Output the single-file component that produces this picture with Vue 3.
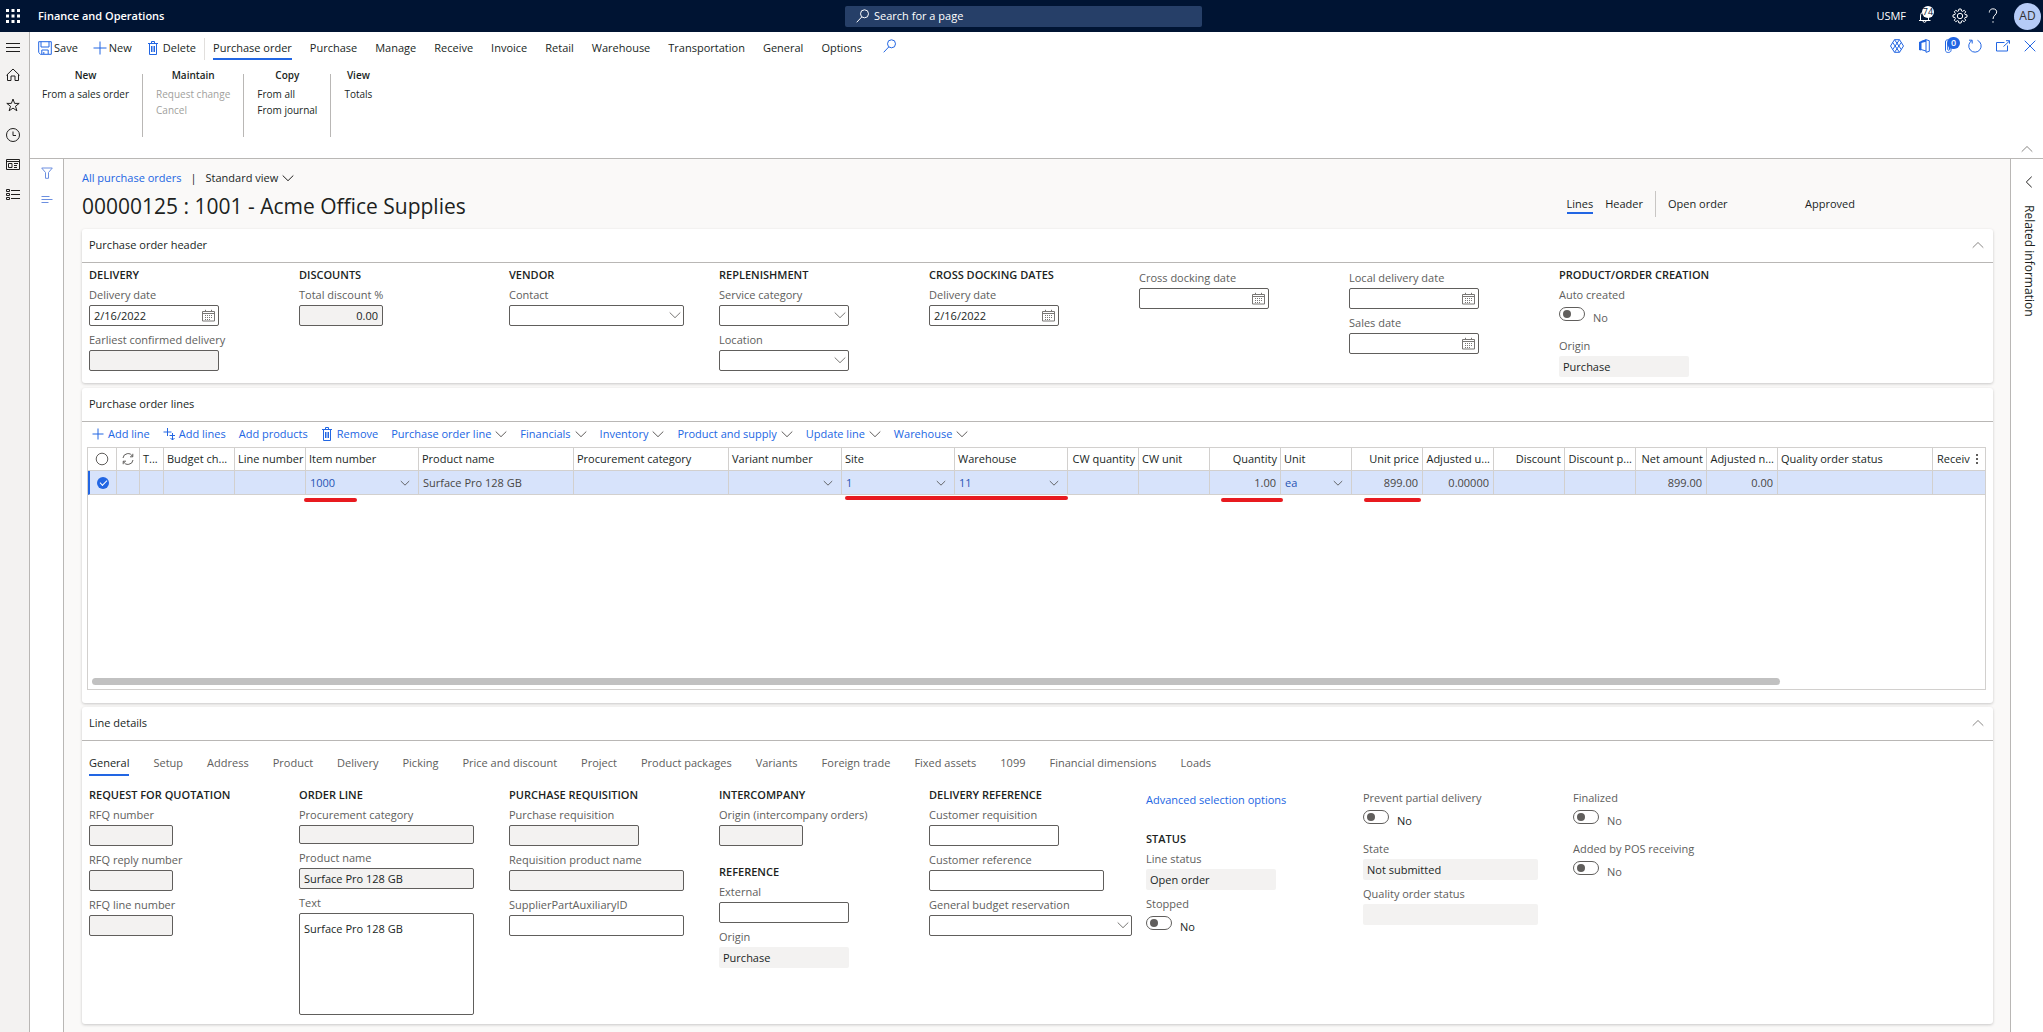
<script setup>
import { h, ref } from 'vue'

const icons = {
  waffle: { w: 14, h: 14, fill: true, d: 'M0 0h3v3H0zM5.5 0h3v3h-3zM11 0h3v3h-3zM0 5.5h3v3H0zM5.5 5.5h3v3h-3zM11 5.5h3v3h-3zM0 11h3v3H0zM5.5 11h3v3h-3zM11 11h3v3h-3z' },
  menu: { w: 14, h: 14, d: 'M0 5.5h14M0 9.5h14M0 13.5h14' },
  home: { w: 14, h: 14, d: 'M1.5 6.5v6h3.5v-4.5h4v4.5h3.5v-6M.5 7.3L7 1l6.5 6.3' },
  star: { w: 14, h: 14, d: 'M7 1l1.6 4.4h4.6L9.5 8.2l1.4 4.6L7 10.1l-3.9 2.7 1.4-4.6L.8 5.4h4.6z' },
  clock: { w: 14, h: 14, d: 'M7 .5a6.5 6.5 0 1 0 0 13a6.5 6.5 0 1 0 0-13M7 3.5v4h3' },
  workspace: { w: 14, h: 14, d: 'M.5 1.5h13v10H.5zM.5 3.5h13M2.5 5.5h3.5v4H2.5zM8 5.5h4M8 7.5h3M8 9.5h3' },
  modules: { w: 14, h: 14, d: 'M.5 1.5h3v2h-3zM.5 5.5h3v2h-3zM.5 9.5h3v2h-3zM5 2.5h9M5 6.5h9M5 10.5h9' },
  search: { w: 14, h: 14, d: 'M8.5 .8a4 4 0 1 1 0 8a4 4 0 1 1 0-8M5.8 7.9L.7 13.3' },
  save: { w: 14, h: 14, d: 'M.7.7h12.6v12.6H2.5L.7 11.5zM3 .7v5.3h8V.7M3.8 13V9h6.4v4M5.8 11v2' },
  plus: { w: 14, h: 14, d: 'M7 .5v13M.5 7h13' },
  plusSmall: { w: 12, h: 12, d: 'M6 .5v11M.5 6h11' },
  addLines: { w: 12, h: 14, d: 'M4.5 1v8M.5 5h8M9.5 6v7M7.5 11l2 2 2-2M6.500 8.500h5.500' },
  trash: { w: 12, h: 14, d: 'M1 2.5h10M4.500 2.500v-2h3v2M2.500 2.500v11h7v-11M4.500 5v6M6 5v6M7.500 5v6' },
  chevronDown: { w: 12, h: 12, d: 'M.7 3.5L6 8.7l5.3-5.2' },
  chevronUp: { w: 12, h: 12, d: 'M.7 8.7L6 3.5l5.3 5.2' },
  chevronLeft: { w: 12, h: 12, d: 'M8.7.7L3.3 6l5.4 5.3' },
  filter: { w: 12, h: 12, d: 'M.7 1h10.6L7.5 5.5v5.8h-3V5.5z' },
  lines: { w: 12, h: 12, d: 'M.5 2.500h8M.5 5.500h11M.5 8.500h7' },
  bell: { w: 14, h: 14, d: 'M1 11.5h11.5M2.5 11.5V7c0-2.5 1.5-4.5 4-4.5s4 2 4 4.5v4.5M5 12c0 1.8 3 1.8 3 0' },
  gear: { w: 16, h: 16, d: 'M6.9 1h2.2l.4 2 1 .4 1.7-1.1 1.5 1.5-1.1 1.7.4 1 2 .4v2.2l-2 .4-.4 1 1.1 1.7-1.5 1.5-1.7-1.1-1 .4-.4 2H6.9l-.4-2-1-.4-1.7 1.1-1.5-1.5 1.1-1.7-.4-1-2-.4V6.9l2-.4.4-1-1.1-1.7 1.5-1.5 1.7 1.1 1-.4zM8 5.3a2.7 2.7 0 1 0 0 5.4a2.7 2.7 0 1 0 0-5.4' },
  help: { w: 10, h: 16, d: 'M1.3 4.5c0-5 7.4-4.6 7.4-.6 0 3-3.7 3.3-3.7 7.1M5 13.2v1.5' },
  apps: { w: 14, h: 14, d: 'M4.5.7h5L13.500 7l-4 6.300h-5L.5 7zM4.500.7l6.800 9.800M9.500.7L2.700 10.500M2.700 3.500l6.800 9.800M11.300 3.500L4.500 13.300' },
  office: { w: 12, h: 14, d: 'M8 .7l3.3 1v10.6l-3.300 1zM8 .7L3 2.500v8L8 12' },
  officeBar: { w: 12, h: 14, fill: true, d: 'M8 .5L1 3v8l2 .5V4l5-1.3z' },
  clip: { w: 8, h: 14, d: 'M7 3v8.5c0 2.6-5.5 2.6-5.5 0V3c0-3 4-3 4 0v7.5c0 1-1.8 1-1.8 0V4' },
  refresh: { w: 14, h: 14, d: 'M9.5 1.3a6.200 6.200 0 1 1-5.500.2M1 1.200h3.200v3.300' },
  popout: { w: 14, h: 14, d: 'M8.5 3.5H.5v8.500h11V6.500M7.500 7.500l6-5.500M10 1.700h3.500v3' },
  close: { w: 12, h: 12, d: 'M.7.7l10.6 10.6M11.3.7L.7 11.3' },
  calendar: { w: 14, h: 14, d: 'M.5 2.5h12v9.500H.5zM.5 4.500h12M3.500.8v2M9.500.8v2M3 6.500h1M5 6.500h1M7 6.500h1M9 6.500h1M3 8.500h1M5 8.500h1M7 8.500h1M9 8.500h1M3 10.500h1M5 10.500h1M7 10.500h1' },
  circle: { w: 14, h: 14, d: 'M7 1.2a5.8 5.8 0 1 0 0 11.6a5.8 5.8 0 1 0 0-11.6' },
  sync: { w: 12, h: 12, d: 'M1 5a5 5 0 0 1 9.5-1.5M10.8.8v3H8M11 7a5 5 0 0 1-9.5 1.5M1.2 11.200v-3H4' },
  more: { w: 4, h: 14, fill: true, d: 'M1 2h2v2H1zM1 6h2v2H1zM1 10h2v2H1z' },
}

const Icon = ({ name }) => {
  const icon = icons[name]
  return h(
    'svg',
    { class: 'icon', width: icon.w, height: icon.h, viewBox: `0 0 ${icon.w} ${icon.h}`, 'aria-hidden': 'true' },
    [h('path', { d: icon.d, fill: icon.fill ? 'currentColor' : 'none', stroke: icon.fill ? 'none' : 'currentColor' })],
  )
}
Icon.props = ['name']

const navItems = [
  { icon: 'menu', label: 'Expand the navigation pane' },
  { icon: 'home', label: 'Home' },
  { icon: 'star', label: 'Favorites' },
  { icon: 'clock', label: 'Recent' },
  { icon: 'workspace', label: 'Workspaces' },
  { icon: 'modules', label: 'Modules' },
]

const actionTabs = ['Purchase order', 'Purchase', 'Manage', 'Receive', 'Invoice', 'Retail', 'Warehouse', 'Transportation', 'General', 'Options']
const activeAction = ref('Purchase order')

const ribbonGroups = [
  { title: 'New', items: ['From a sales order'] },
  { title: 'Maintain', items: ['Request change', 'Cancel'], disabled: true },
  { title: 'Copy', items: ['From all', 'From journal'] },
  { title: 'View', items: ['Totals'] },
]

const lineMenus = ['Purchase order line', 'Financials', 'Inventory', 'Product and supply', 'Update line', 'Warehouse']

const columns = [
  { title: 'T...', width: 24 },
  { title: 'Budget ch...', width: 71 },
  { title: 'Line number', width: 71, align: 'right' },
  { title: 'Item number', width: 113, value: '1000', link: true, lookup: true, mark: 'item' },
  { title: 'Product name', width: 155, value: 'Surface Pro 128 GB' },
  { title: 'Procurement category', width: 155 },
  { title: 'Variant number', width: 113, lookup: true },
  { title: 'Site', width: 113, value: '1', link: true, lookup: true, mark: 'site' },
  { title: 'Warehouse', width: 113, value: '11', link: true, lookup: true },
  { title: 'CW quantity', width: 71, align: 'right' },
  { title: 'CW unit', width: 71 },
  { title: 'Quantity', width: 71, align: 'right', value: '1.00', mark: 'quantity' },
  { title: 'Unit', width: 71, value: 'ea', link: true, lookup: true },
  { title: 'Unit price', width: 71, align: 'right', value: '899.00', mark: 'price' },
  { title: 'Adjusted u...', width: 71, align: 'right', value: '0.00000' },
  { title: 'Discount', width: 71, align: 'right' },
  { title: 'Discount p...', width: 71, align: 'right' },
  { title: 'Net amount', width: 71, align: 'right', value: '899.00' },
  { title: 'Adjusted n...', width: 71, align: 'right', value: '0.00' },
  { title: 'Quality order status', width: 155 },
]

const detailTabs = ['General', 'Setup', 'Address', 'Product', 'Delivery', 'Picking', 'Price and discount', 'Project', 'Product packages', 'Variants', 'Foreign trade', 'Fixed assets', '1099', 'Financial dimensions', 'Loads']
const activeTab = ref('General')

const cards = [
  {
    id: 'header',
    title: 'Purchase order header',
    collapsible: true,
    columns: [
      [{ title: 'DELIVERY', fields: [
        { label: 'Delivery date', kind: 'date', size: 'm', value: '2/16/2022' },
        { label: 'Earliest confirmed delivery', kind: 'readonly', size: 'm' },
      ] }],
      [{ title: 'DISCOUNTS', fields: [{ label: 'Total discount %', kind: 'readonly', size: 's', value: '0.00', number: true }] }],
      [{ title: 'VENDOR', fields: [{ label: 'Contact', kind: 'select', size: 'l' }] }],
      [{ title: 'REPLENISHMENT', fields: [
        { label: 'Service category', kind: 'select', size: 'm' },
        { label: 'Location', kind: 'select', size: 'm' },
      ] }],
      [{ title: 'CROSS DOCKING DATES', fields: [{ label: 'Delivery date', kind: 'date', size: 'm', value: '2/16/2022' }] }],
      [{ fields: [{ label: 'Cross docking date', kind: 'date', size: 'm' }] }],
      [{ fields: [
        { label: 'Local delivery date', kind: 'date', size: 'm' },
        { label: 'Sales date', kind: 'date', size: 'm' },
      ] }],
      [{ title: 'PRODUCT/ORDER CREATION', fields: [
        { label: 'Auto created', kind: 'toggle', disabled: true },
        { label: 'Origin', kind: 'static', size: 'm', value: 'Purchase' },
      ] }],
    ],
  },
  { id: 'lines', title: 'Purchase order lines', grid: true },
  {
    id: 'details',
    title: 'Line details',
    collapsible: true,
    tabs: detailTabs,
    columns: [
      [{ title: 'REQUEST FOR QUOTATION', fields: [
        { label: 'RFQ number', kind: 'readonly', size: 's' },
        { label: 'RFQ reply number', kind: 'readonly', size: 's' },
        { label: 'RFQ line number', kind: 'readonly', size: 's' },
      ] }],
      [{ title: 'ORDER LINE', fields: [
        { label: 'Procurement category', kind: 'readonly', size: 'l', short: true },
        { label: 'Product name', kind: 'readonly', size: 'l', value: 'Surface Pro 128 GB' },
        { label: 'Text', kind: 'textarea', size: 'l', value: 'Surface Pro 128 GB' },
      ] }],
      [{ title: 'PURCHASE REQUISITION', fields: [
        { label: 'Purchase requisition', kind: 'readonly', size: 'm' },
        { label: 'Requisition product name', kind: 'readonly', size: 'l' },
        { label: 'SupplierPartAuxiliaryID', kind: 'input', size: 'l' },
      ] }],
      [
        { title: 'INTERCOMPANY', fields: [{ label: 'Origin (intercompany orders)', kind: 'readonly', size: 's' }] },
        { title: 'REFERENCE', fields: [
          { label: 'External', kind: 'input', size: 'm' },
          { label: 'Origin', kind: 'static', size: 'm', value: 'Purchase' },
        ] },
      ],
      [{ title: 'DELIVERY REFERENCE', fields: [
        { label: 'Customer requisition', kind: 'input', size: 'm' },
        { label: 'Customer reference', kind: 'input', size: 'l' },
        { label: 'General budget reservation', kind: 'select', size: 'xl' },
      ] }],
      [
        { link: 'Advanced selection options', fields: [] },
        { title: 'STATUS', fields: [
          { label: 'Line status', kind: 'static', size: 'm', value: 'Open order' },
          { label: 'Stopped', kind: 'toggle' },
        ] },
      ],
      [{ fields: [
        { label: 'Prevent partial delivery', kind: 'toggle' },
        { label: 'State', kind: 'static', size: 'l', value: 'Not submitted' },
        { label: 'Quality order status', kind: 'static', size: 'l' },
      ] }],
      [{ fields: [
        { label: 'Finalized', kind: 'toggle', disabled: true },
        { label: 'Added by POS receiving', kind: 'toggle', disabled: true },
      ] }],
    ],
  },
]

const fieldId = (...parts) => parts.join('-')
</script>

<template>
  <div class="app">
    <header class="topbar">
      <div class="topbar__brand">
        <button class="plain" aria-label="App launcher"><Icon name="waffle" /></button>
        <strong>Finance and Operations</strong>
      </div>
      <label class="topbar__search">
        <Icon name="search" />
        <input type="search" placeholder="Search for a page" aria-label="Search for a page" />
      </label>
      <div class="topbar__tools">
        <button class="plain">USMF</button>
        <button class="plain bell" aria-label="Notifications">
          <Icon name="bell" />
          <span class="bell__count">74</span>
        </button>
        <button class="plain" aria-label="Settings"><Icon name="gear" /></button>
        <button class="plain" aria-label="Help"><Icon name="help" /></button>
        <button class="plain avatar">AD</button>
      </div>
    </header>

    <div class="shell">
      <nav class="rail">
        <button v-for="item in navItems" :key="item.icon" class="plain" :aria-label="item.label">
          <Icon :name="item.icon" />
        </button>
      </nav>

      <div class="content">
        <section class="actions">
          <div class="actions__bar">
            <button class="plain command"><Icon name="save" />Save</button>
            <button class="plain command"><Icon name="plus" />New</button>
            <button class="plain command command--last"><Icon name="trash" />Delete</button>
            <div class="actions__tabs">
              <button
                v-for="tab in actionTabs"
                :key="tab"
                :class="['plain', 'tab', { 'tab--active': tab === activeAction }]"
                @click="activeAction = tab"
              >
                {{ tab }}
              </button>
              <button class="plain actions__find" aria-label="Search actions"><Icon name="search" /></button>
            </div>
            <div class="actions__tools">
              <button class="plain" aria-label="Power Apps"><Icon name="apps" /></button>
              <button class="plain office" aria-label="Open in Microsoft Office">
                <Icon name="office" />
                <Icon name="officeBar" class="office__bar" />
              </button>
              <button class="plain attach" aria-label="Attachments">
                <Icon name="clip" />
                <span class="attach__count">0</span>
              </button>
              <button class="plain" aria-label="Refresh"><Icon name="refresh" /></button>
              <button class="plain" aria-label="Open in new window"><Icon name="popout" /></button>
              <button class="plain" aria-label="Close"><Icon name="close" /></button>
            </div>
          </div>
          <div class="ribbon">
            <template v-for="(group, index) in ribbonGroups" :key="group.title">
              <span v-if="index" class="ribbon__rule"></span>
              <div class="ribbon__group">
                <h2>{{ group.title }}</h2>
                <button v-for="item in group.items" :key="item" class="plain" :disabled="group.disabled">{{ item }}</button>
              </div>
            </template>
            <button class="plain ribbon__collapse" aria-label="Collapse"><Icon name="chevronUp" /></button>
          </div>
        </section>

        <div class="workspace">
          <aside class="filters">
            <button class="plain" aria-label="Show filters"><Icon name="filter" /></button>
            <button class="plain" aria-label="Show list"><Icon name="lines" /></button>
          </aside>

          <main class="page">
            <div class="page__head">
              <div>
                <div class="crumbs">
                  <a href="#">All purchase orders</a>
                  <span>|</span>
                  <button class="plain crumbs__view">Standard view<Icon name="chevronDown" /></button>
                </div>
                <h1>00000125 : 1001 - Acme Office Supplies</h1>
              </div>
              <div class="status">
                <button class="plain status__tab status__tab--active">Lines</button>
                <button class="plain status__tab">Header</button>
                <span class="status__value">Open order</span>
                <span class="status__value status__value--last">Approved</span>
              </div>
            </div>

            <section v-for="card in cards" :key="card.id" :class="['card', `card--${card.id}`]">
              <div class="card__head">
                <h2>{{ card.title }}</h2>
                <button v-if="card.collapsible" class="plain" aria-label="Collapse section"><Icon name="chevronUp" /></button>
              </div>

              <template v-if="card.grid">
                <div class="toolbar">
                  <button class="plain"><Icon name="plusSmall" />Add line</button>
                  <button class="plain"><Icon name="addLines" />Add lines</button>
                  <button class="plain">Add products</button>
                  <button class="plain"><Icon name="trash" />Remove</button>
                  <button v-for="menu in lineMenus" :key="menu" class="plain toolbar__menu">
                    {{ menu }}<Icon name="chevronDown" />
                  </button>
                </div>
                <div class="grid">
                  <table>
                    <colgroup>
                      <col style="width: 29px" />
                      <col style="width: 23px" />
                      <col v-for="col in columns" :key="col.title" :style="{ width: col.width + 'px' }" />
                      <col />
                    </colgroup>
                    <thead>
                      <tr>
                        <th class="grid__icon"><Icon name="circle" /></th>
                        <th class="grid__icon"><Icon name="sync" /></th>
                        <th v-for="col in columns" :key="col.title" :class="{ right: col.align === 'right' }">{{ col.title }}</th>
                        <th>
                          <div class="grid__last">
                            <span>Receiv</span>
                            <button class="plain" aria-label="Grid options"><Icon name="more" /></button>
                          </div>
                        </th>
                      </tr>
                    </thead>
                    <tbody>
                      <tr>
                        <td class="grid__icon grid__select"><input type="checkbox" checked aria-label="Select row" /></td>
                        <td></td>
                        <td v-for="col in columns" :key="col.title" :class="{ right: col.align === 'right' }">
                          <div class="cell">
                            <a v-if="col.link" href="#">{{ col.value }}</a>
                            <span v-else>{{ col.value }}</span>
                            <Icon v-if="col.lookup" name="chevronDown" />
                            <i v-if="col.mark" :class="['mark', `mark--${col.mark}`]"></i>
                          </div>
                        </td>
                        <td></td>
                      </tr>
                    </tbody>
                  </table>
                  <div class="grid__scroll"></div>
                </div>
              </template>

              <template v-else>
                <div v-if="card.tabs" class="tabs">
                  <button
                    v-for="tab in card.tabs"
                    :key="tab"
                    :class="['plain', 'tabs__item', { 'tabs__item--active': tab === activeTab }]"
                    @click="activeTab = tab"
                  >
                    {{ tab }}
                  </button>
                </div>
                <div class="form">
                  <div v-for="(column, c) in card.columns" :key="c" class="form__column">
                    <div v-for="(group, g) in column" :key="g" :class="['group', { 'group--bare': !group.title }]">
                      <h3 v-if="group.title">{{ group.title }}</h3>
                      <a v-if="group.link" class="group__link" href="#">{{ group.link }}</a>
                      <div v-for="(field, f) in group.fields" :key="f" class="field">
                        <label :for="fieldId(card.id, c, g, f)">{{ field.label }}</label>
                        <div v-if="field.kind === 'toggle'" :class="['toggle', { 'toggle--disabled': field.disabled }]">
                          <input :id="fieldId(card.id, c, g, f)" type="checkbox" role="switch" :disabled="field.disabled" />
                          <span>No</span>
                        </div>
                        <textarea
                          v-else-if="field.kind === 'textarea'"
                          :id="fieldId(card.id, c, g, f)"
                          :class="['box', `box--${field.size}`]"
                          :value="field.value"
                        ></textarea>
                        <div v-else :class="['box-wrap', `box--${field.size}`]">
                          <select v-if="field.kind === 'select'" :id="fieldId(card.id, c, g, f)" class="box">
                            <option></option>
                          </select>
                          <input
                            v-else
                            :id="fieldId(card.id, c, g, f)"
                            type="text"
                            :class="['box', `box--${field.kind}`, { 'box--number': field.number, 'box--short': field.short }]"
                            :value="field.value"
                            :readonly="field.kind === 'readonly' || field.kind === 'static'"
                          />
                          <Icon v-if="field.kind === 'select'" name="chevronDown" />
                          <Icon v-if="field.kind === 'date'" name="calendar" />
                        </div>
                      </div>
                    </div>
                  </div>
                </div>
              </template>
            </section>
          </main>

          <aside class="related">
            <button class="plain" aria-label="Expand related information"><Icon name="chevronLeft" /></button>
            <span>Related information</span>
          </aside>
        </div>
      </div>
    </div>
  </div>
</template>

<style>
body {
  margin: 0;
}
</style>

<style scoped>
.app {
  display: flex;
  flex-direction: column;
  min-height: 100vh;
  color: #201f1e;
  background: #faf9f8;
  font-family: 'Open Sans', 'Noto Sans', sans-serif;
  font-size: 11px;
  line-height: 16px;
}

.app * {
  box-sizing: border-box;
}

h1,
h2,
h3 {
  margin: 0;
}

a {
  color: #2266e3;
  text-decoration: none;
}

input,
select,
textarea {
  font: inherit;
  color: inherit;
}

.plain {
  display: inline-flex;
  align-items: center;
  padding: 0;
  border: 0;
  background: none;
  color: inherit;
  font: inherit;
  white-space: nowrap;
  cursor: pointer;
}

.icon {
  display: block;
  flex: none;
}

.topbar {
  display: grid;
  grid-template-columns: 1fr 357px 1fr;
  align-items: center;
  height: 32px;
  padding: 0 2px 0 6px;
  background: #001433;
  color: #fff;
}

.topbar__brand {
  display: flex;
  align-items: center;
  gap: 18px;
}

.topbar__brand strong {
  font-weight: 600;
}

.topbar__search {
  display: flex;
  align-items: center;
  gap: 4px;
  height: 21px;
  padding-left: 11px;
  border-radius: 2px;
  background: #263f68;
}

.topbar__search input {
  flex: 1;
  min-width: 0;
  padding: 0;
  border: 0;
  outline: 0;
  background: none;
}

.topbar__search input::placeholder {
  color: #fff;
}

.topbar__tools {
  display: flex;
  align-items: center;
  justify-content: flex-end;
}

.topbar__tools .plain + .plain {
  margin-left: 20px;
}

.topbar__tools .plain + .bell {
  position: relative;
  margin-left: 12px;
}

.topbar__tools .plain + .avatar {
  margin-left: 16px;
}

.bell__count {
  position: absolute;
  top: -3px;
  right: -2px;
  width: 12px;
  height: 12px;
  border-radius: 50%;
  background: #fff;
  color: #001433;
  font-size: 9px;
  line-height: 12px;
  text-align: center;
}

.avatar {
  justify-content: center;
  width: 27px;
  height: 27px;
  border-radius: 50%;
  background: #b5cbf7;
  color: #323130;
  font-size: 12px;
}

.shell {
  display: flex;
  flex: 1;
}

.rail {
  display: flex;
  flex: none;
  flex-direction: column;
  gap: 16px;
  width: 30px;
  padding: 6px 0 0 6px;
  border-right: 1px solid #b9b7b5;
  background: #f3f2f1;
}

.content {
  display: flex;
  flex: 1;
  flex-direction: column;
  min-width: 0;
}

.actions {
  border-bottom: 1px solid #b9b7b5;
  background: #fff;
}

.actions__bar {
  display: flex;
  align-items: flex-start;
  height: 32px;
  padding: 6px 7px 0 8px;
}

.command {
  gap: 2px;
  height: 19px;
  margin-right: 15px;
}

.command .icon {
  color: #2266e3;
}

.command--last {
  gap: 4px;
  margin-right: 8px;
}

.actions__tabs {
  display: flex;
  gap: 18px;
  padding-left: 8px;
  border-left: 1px solid #e1dfdd;
}

.tab {
  height: 22px;
  padding-bottom: 1px;
  border-bottom: 2px solid transparent;
}

.tab--active {
  border-color: #2266e3;
}

.actions__find {
  height: 16px;
  margin-left: 3px;
  color: #2266e3;
}

.actions__tools {
  display: flex;
  gap: 14px;
  margin-left: auto;
  color: #2266e3;
}

.actions__tools .plain {
  height: 16px;
}

.office {
  position: relative;
}

.office__bar {
  position: absolute;
  left: 0;
  top: 1px;
}

.attach {
  position: relative;
  width: 10px;
}

.attach__count {
  position: absolute;
  left: 3px;
  top: -1px;
  width: 13px;
  height: 12px;
  border-radius: 6px;
  background: #2266e3;
  color: #fff;
  font-size: 9px;
  font-weight: 600;
  line-height: 12px;
  text-align: center;
}

.ribbon {
  display: flex;
  height: 94px;
  padding: 3px 10px 0 12px;
  font-size: 10px;
}

.ribbon__group {
  display: flex;
  flex-direction: column;
  align-items: flex-start;
}

.ribbon__group h2 {
  align-self: center;
  margin-bottom: 3px;
  font-size: 10px;
  font-weight: 600;
  line-height: 16px;
}

.ribbon__group .plain:disabled {
  color: #a19f9d;
}

.ribbon__rule {
  width: 1px;
  height: 63px;
  margin: 7px 13px 0;
  background: #b9b7b5;
}

.ribbon__collapse {
  align-self: flex-end;
  height: 18px;
  margin-left: auto;
  color: #8a8886;
}

.workspace {
  display: flex;
  flex: 1;
}

.filters {
  display: flex;
  flex: none;
  flex-direction: column;
  gap: 15px;
  width: 34px;
  padding: 8px 0 0 11px;
  border-right: 1px solid #b9b7b5;
  background: #fff;
  color: #6c8fe0;
}

.related {
  display: flex;
  flex: none;
  flex-direction: column;
  align-items: center;
  gap: 17px;
  width: 33px;
  padding: 17px 0 0 4px;
  border-left: 1px solid #b9b7b5;
  background: #fff;
}

.related span {
  font-size: 12px;
  writing-mode: vertical-rl;
}

.page {
  flex: 1;
  min-width: 0;
  padding: 11px 17px 8px 18px;
}

.page__head {
  display: flex;
  align-items: flex-end;
  justify-content: space-between;
  margin-bottom: 8px;
}

.crumbs {
  display: flex;
  gap: 9px;
}

.crumbs__view {
  gap: 4px;
}

h1 {
  margin-top: 6px;
  padding-bottom: 1px;
  font-size: 21px;
  font-weight: 400;
  line-height: 28px;
}

.status {
  display: flex;
  align-items: center;
  height: 26px;
  margin-bottom: 4px;
}

.status__tab {
  height: 20px;
  margin-right: 12px;
  padding-top: 2px;
  border-bottom: 2px solid transparent;
}

.status__tab--active {
  border-color: #2266e3;
}

.status__value {
  width: 137px;
}

.status__tab + .status__value {
  width: 150px;
  padding: 5px 0 5px 12px;
  border-left: 1px solid #c8c6c4;
}

.status__value--last {
  width: 188px;
}

.card {
  margin-bottom: 5px;
  border-radius: 3px;
  background: #fff;
  box-shadow: 0 1px 3px rgba(0, 0, 0, 0.2);
}

.card:last-child {
  margin-bottom: 0;
  padding-bottom: 3px;
}

.card__head {
  display: flex;
  align-items: center;
  justify-content: space-between;
  height: 34px;
  padding: 0 9px 2px 7px;
  border-bottom: 1px solid #b9b7b5;
}

.card__head h2 {
  font-size: 11px;
  font-weight: 500;
}

.card__head .plain {
  color: #8a8886;
}

.toolbar {
  display: flex;
  gap: 13px;
  height: 25px;
  padding: 0 10px 2px;
  color: #2266e3;
}

.toolbar .plain {
  gap: 4px;
}

.toolbar__menu .icon {
  color: #605e5c;
}

.grid {
  display: flex;
  flex-direction: column;
  min-height: 243px;
  margin: 0 7px 0 5px;
  border: 1px solid #d2d0ce;
}

.card--lines {
  margin-bottom: 4px;
  padding-bottom: 13px;
}

table {
  width: 100%;
  border-collapse: separate;
  border-spacing: 0;
  table-layout: fixed;
}

th,
td {
  height: 23px;
  padding: 0 3px;
  border-right: 1px solid #d2d0ce;
  border-bottom: 1px solid #d2d0ce;
  font-weight: 400;
  text-align: left;
  white-space: nowrap;
}

th:last-child,
td:last-child {
  border-right: 0;
}

td {
  height: 24px;
  background: #d7e3fb;
  color: #484644;
}

td a {
  color: #2753b3;
}

.right {
  text-align: right;
}

.grid__icon {
  padding: 0;
}

.grid__icon .icon {
  margin: 0 auto;
  color: #605e5c;
}

.grid__select {
  border-left: 2px solid #2266e3;
  text-align: center;
}

.grid__select input {
  display: grid;
  place-items: center;
  width: 12px;
  height: 12px;
  margin: 0 auto;
  border-radius: 50%;
  background: #2266e3;
  appearance: none;
}

.grid__select input::before {
  content: '';
  width: 6px;
  height: 3px;
  margin-bottom: 2px;
  border: solid #fff;
  border-width: 0 0 1px 1px;
  transform: rotate(-45deg);
}

.grid__last {
  display: flex;
  justify-content: space-between;
  padding: 0 3px 0 1px;
}

.grid__last .icon {
  color: #605e5c;
}

.cell {
  position: relative;
  display: flex;
  align-items: center;
  justify-content: space-between;
  padding: 0 1px;
}

.cell .icon {
  margin-right: 3px;
  transform: scale(0.8);
}

.right .cell {
  justify-content: flex-end;
}

.mark {
  position: absolute;
  top: 23px;
  height: 4px;
  border-radius: 2px;
  background: #e81a1f;
}

.mark--item {
  left: -5px;
  width: 53px;
}

.mark--site {
  left: 0;
  top: 21px;
  width: 223px;
}

.mark--quantity {
  right: -6px;
  width: 62px;
}

.mark--price {
  right: -2px;
  width: 57px;
}

.grid__scroll {
  width: 89%;
  height: 7px;
  margin: auto 0 4px 4px;
  border-radius: 4px;
  background: #c1c1c1;
}

.tabs {
  display: flex;
  gap: 24px;
  padding: 14px 7px 7px;
  color: #605e5c;
}

.tabs__item {
  padding-bottom: 3px;
  border-bottom: 2px solid transparent;
}

.tabs__item--active {
  border-color: #2266e3;
  color: #201f1e;
}

.form {
  display: flex;
  flex-wrap: wrap;
  gap: 0 14px;
  padding: 4px 7px 0;
}

.form__column {
  min-width: 196px;
}

.card--details .form__column:nth-child(6) {
  min-width: 203px;
}

.group + .group {
  margin-top: 18px;
}

.group--bare {
  padding-top: 3px;
}

.group__link {
  display: block;
  padding: 2px 0 5px;
}

h3 {
  margin-bottom: 4px;
  font-size: 11px;
  font-weight: 600;
  line-height: 16px;
}

.field {
  display: flex;
  flex-direction: column;
  gap: 2px;
  margin-bottom: 6px;
  color: #605e5c;
}

.box-wrap {
  position: relative;
  color: #201f1e;
}

.box-wrap .icon {
  position: absolute;
  top: 4px;
  right: 3px;
  color: #797775;
  pointer-events: none;
}

.box {
  display: block;
  width: 100%;
  height: 21px;
  padding: 0 4px;
  border: 1px solid #605e5c;
  border-radius: 2px;
  background: #fff;
  color: #201f1e;
  appearance: none;
}

.box--readonly,
.box--static {
  background: #f3f2f1;
}

.box--static {
  border-color: transparent;
  padding: 0 3px;
}

.box--number {
  text-align: right;
}

.box--short {
  height: 19px;
}

.box--s {
  width: 84px;
}

.box--m {
  width: 130px;
}

.box--l {
  width: 175px;
}

.box--xl {
  width: 203px;
}

textarea.box {
  height: 102px;
  padding: 7px 4px;
  resize: none;
}

.toggle {
  display: flex;
  gap: 8px;
  height: 27px;
  color: #201f1e;
}

.toggle input {
  width: 26px;
  height: 14px;
  margin: 2px 0 0;
  padding: 2px 3px;
  border: 1px solid #605e5c;
  border-radius: 7px;
  background: #fff;
  appearance: none;
}

.toggle input::before {
  content: '';
  display: block;
  width: 8px;
  height: 8px;
  border-radius: 50%;
  background: #605e5c;
}

.toggle span {
  margin-top: 5px;
}

.toggle--disabled {
  color: #605e5c;
}
</style>
